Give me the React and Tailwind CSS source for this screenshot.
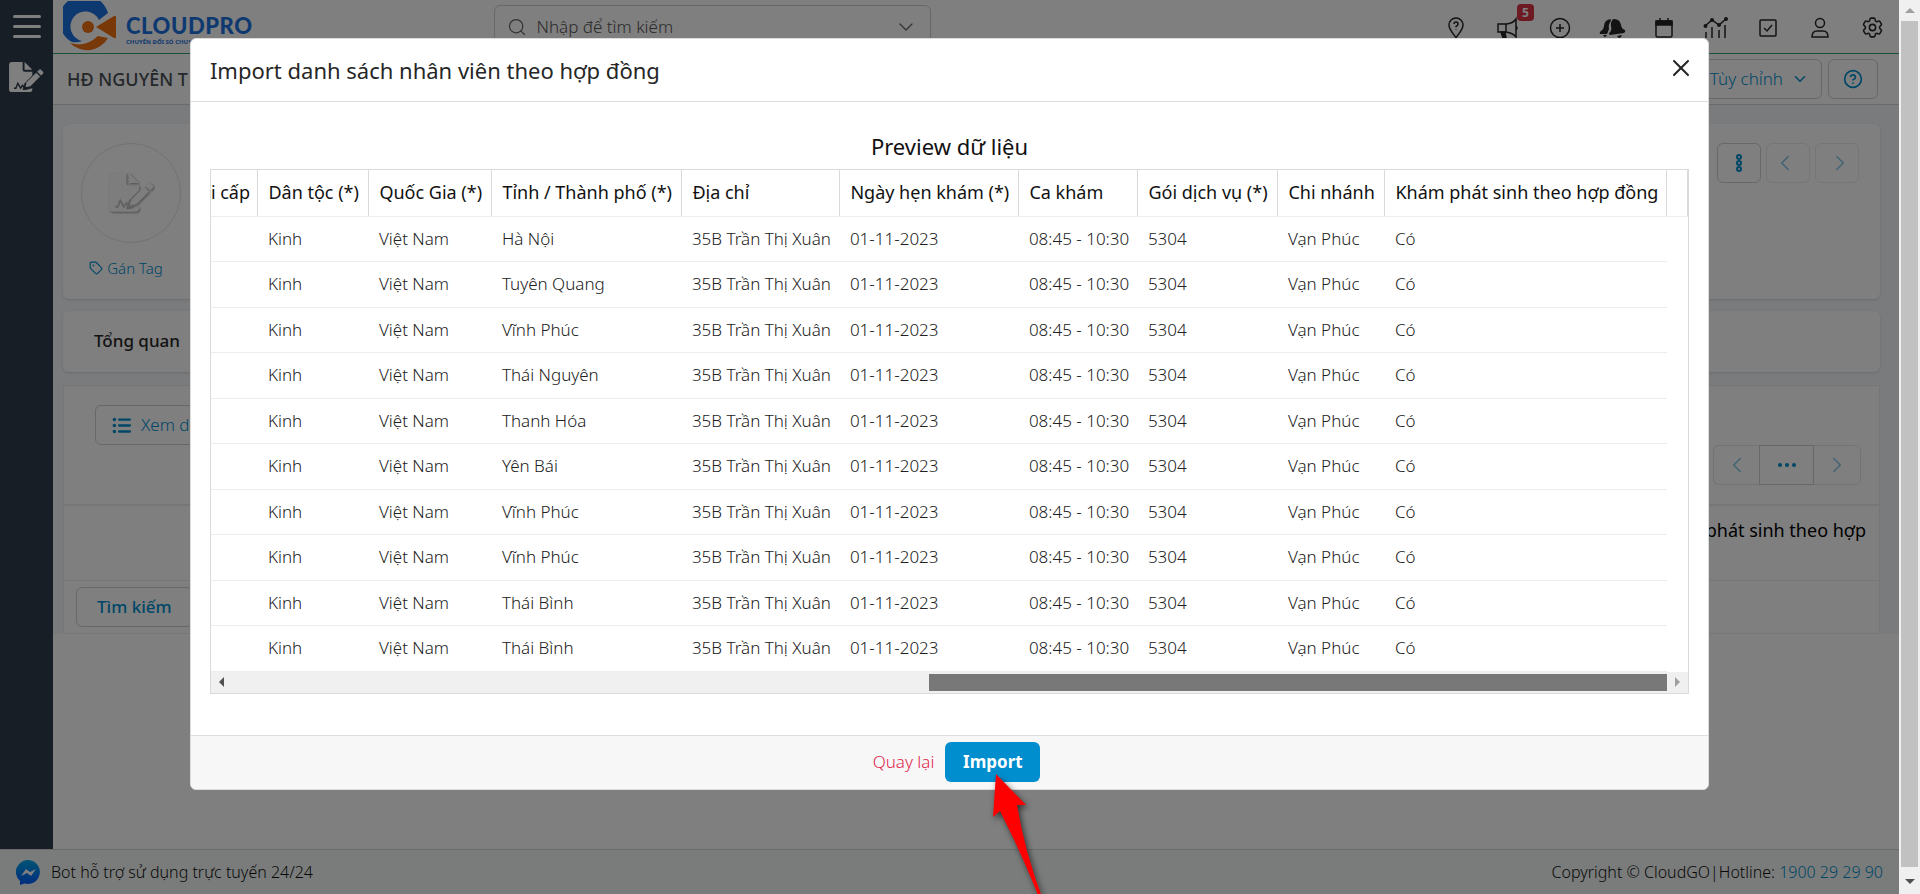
import { ChevronDown, ChevronLeft, ChevronRight, CircleHelp, Search, Tag, X } from 'lucide-react';
import { HiOutlineCog6Tooth } from 'react-icons/hi2';
import { FaListUl } from 'react-icons/fa6';

const COLUMNS = [
    { label: 'i cấp', width: 'w-[47px]' },
    { label: 'Dân tộc (*)', width: 'w-[111px]' },
    { label: 'Quốc Gia (*)', width: 'w-[123px]' },
    { label: 'Tỉnh / Thành phố (*)', width: 'w-[190px]' },
    { label: 'Địa chỉ', width: 'w-[158px]' },
    { label: 'Ngày hẹn khám (*)', width: 'w-[179px]' },
    { label: 'Ca khám', width: 'w-[119px]' },
    { label: 'Gói dịch vụ (*)', width: 'w-[140px]' },
    { label: 'Chi nhánh', width: 'w-[107px]' },
    { label: 'Khám phát sinh theo hợp đồng', width: 'w-[282px]' },
];

const PROVINCES = [
    'Hà Nội', 'Tuyên Quang', 'Vĩnh Phúc', 'Thái Nguyên', 'Thanh Hóa',
    'Yên Bái', 'Vĩnh Phúc', 'Vĩnh Phúc', 'Thái Bình', 'Thái Bình',
];

const ROWS = PROVINCES.map(province => [
    'Kinh', 'Việt Nam', province, '35B Trần Thị Xuân', '01-11-2023', '08:45 - 10:30', '5304', 'Vạn Phúc', 'Có',
]);

function ContractIcon({ className, inkClass }) {
    return (
        <svg viewBox="0 0 36 32" className={className}>
            <path
                d="M3 0h11v8a2 2 0 0 0 2 2h8v4l-8 8-2 7h3l7-2v1a3 3 0 0 1-3 3H3a3 3 0 0 1-3-3V3a3 3 0 0 1 3-3z"
                fill="currentColor"
            />
            <path d="M16 0l8 8h-8z" fill="currentColor" />
            <path d="M28 11l4 4-10 10-5 1 1-5z" fill="currentColor" />
            <path d="M29 10l2-2q1-1 2 0l2 2q1 1 0 2l-2 2z" fill="currentColor" />
            <path d="M5 27h2l2-5 3 5 2-3 2 3h3" fill="none" strokeWidth="1.5" className={inkClass} />
        </svg>
    );
}

function Logo() {
    return (
        <a href="#" className="flex items-center gap-[9px]">
            <svg viewBox="0 0 54 51" className="h-[51px] w-[54px]">
                <path d="M45 12A25 25 0 1 0 9 41q5 1 10-1A15 15 0 1 1 36 19z" fill="#1d73e0" />
                <path d="M7 42q15 5 28-7l10 2A24 24 0 0 1 7 42z" fill="#f07010" />
                <circle cx="25" cy="26" r="6" fill="#f07010" />
                <path d="M33 26l18-11q2-1 2 1v20q0 2-2 1z" fill="#f07010" />
            </svg>
            <span className="flex flex-col pt-1.5">
                <span className="font-['Lato'] text-[22px] leading-6 font-black tracking-wide text-[#1d73e0]">CLOUDPRO</span>
                <span className="text-[6px] leading-[8px] font-bold text-[#1d73e0]">CHUYỂN ĐỔI SỐ CHUYÊN NGHIỆP</span>
            </span>
        </a>
    );
}

const HEADER_ICONS = [
    {
        name: 'Địa điểm',
        icon: (
            <>
                <path d="M12 22c-2-4-7-8-7-13a7 7 0 0 1 14 0c0 5-5 9-7 13z" />
                <path d="M10 8q0-2 2-2t2 2q0 1.500-2 2.500v.8M12 13v.5" />
            </>
        ),
    },
    {
        name: 'Thông báo',
        badge: '5',
        icon: (
            <>
                <path d="M2 8h8v8H2zM10 8q7-.500 10-5v18q-3-4-10-5" />
                <path d="M5 16l2 6h3l-1-6z" fill="currentColor" />
                <path d="M20 10q2 2 0 4" />
            </>
        ),
    },
    { name: 'Thêm mới', icon: <><circle cx="12" cy="12" r="9.500" /><path d="M12 8v8M8 12h8" /></> },
    {
        name: 'Nhắc nhở',
        icon: (
            <g fill="currentColor" stroke="none">
                <path d="M11 3q-1 1 0 2-3 3-2 8-1 3-2 5H0q-1-2 1-3 3-2 3-5Q4 4 11 3z" />
                <path d="M12 5q0-2 2-2 6 0 7 6 .5 4 4 5 1 2-1 3l-14 2q-2-1 0-3 2-2 1-6-.500-4 1-5z" />
                <path d="M3 19h4q-1 2-2 2t-2-2zM17 20l5-1q-1 3-2.500 3T17 20z" />
            </g>
        ),
    },
    {
        name: 'Lịch',
        icon: (
            <>
                <rect x="4" y="5" width="16" height="16" rx="1.500" />
                <path d="M4 5h16v4H4z" fill="currentColor" />
                <path d="M8 2v3M16 2v3" />
            </>
        ),
    },
    {
        name: 'Báo cáo',
        icon: (
            <>
                <path d="M1 10l7-6 7 5 8-7" />
                <path d="M2 16v6M8 11v11M15 14v8M21 9v13" />
                <g fill="currentColor" stroke="none">
                    <circle cx="1.500" cy="10" r="2" /><circle cx="8" cy="4" r="2" />
                    <circle cx="15" cy="9" r="2" /><circle cx="22" cy="3" r="2" />
                </g>
            </>
        ),
    },
    { name: 'Công việc', icon: <><rect x="4" y="4" width="16" height="16" rx="1" /><path d="M8 12l3 3 5-6" /></> },
    { name: 'Tài khoản', icon: <><circle cx="12" cy="7" r="4.500" /><path d="M4 21q0-6 5-6h6q5 0 5 6z" /></> },
];

function PageHeader() {
    return (
        <header className="flex h-[54px] items-center justify-between border-b border-[#35a56b] pr-3.5 pl-[10px]">
            <Logo />
            <div className="mr-auto ml-[241px] flex h-11 w-[437px] items-center rounded-md border border-[#d0d0d0] px-3 text-[#666]">
                <Search size={20} strokeWidth={1.5} />
                <input
                    type="text"
                    aria-label="Tìm kiếm"
                    placeholder="Nhập để tìm kiếm"
                    className="ml-2.5 min-w-0 flex-1 text-[17px] font-light placeholder:text-[#555]"
                />
                <ChevronDown size={24} strokeWidth={1.25} />
            </div>
            <div className="flex items-center gap-7 pt-0.5 text-[#262626]">
                {HEADER_ICONS.map(({ name, badge, icon }) => (
                    <button key={name} aria-label={name} className="relative flex w-6 justify-center">
                        <svg viewBox="0 0 24 24" className="h-6 w-6 overflow-visible" fill="none" stroke="currentColor" strokeWidth="1.5">
                            {icon}
                        </svg>
                        {badge && (
                            <span className="absolute -top-3 left-[21px] h-[17px] w-[17px] rounded-sm bg-[#dc3545] text-center text-xs leading-[17px] font-bold text-white">
                                {badge}
                            </span>
                        )}
                    </button>
                ))}
                <button aria-label="Cài đặt"><HiOutlineCog6Tooth size={25} /></button>
            </div>
        </header>
    );
}

function PageContent() {
    return (
        <main className="flex flex-1 flex-col">
            <div className="flex h-[51px] items-center justify-between border-b border-[#d4d4d4] pr-[21px] pl-3.5">
                <h1 className="text-[18px] font-medium text-[#495057]">HĐ NGUYÊN T</h1>
                <div className="flex gap-1.5 text-[17px] text-[#008ecf]">
                    <button className="flex h-10 items-center gap-2 rounded-md border border-[#d0d0d0] px-3 font-light">
                        Tùy chỉnh <ChevronDown size={18} />
                    </button>
                    <button aria-label="Trợ giúp" className="flex h-10 w-[50px] items-center justify-center rounded-md border border-[#d0d0d0]">
                        <CircleHelp size={20} />
                    </button>
                </div>
            </div>

            <div className="bg-[#f3f6fa] pt-[19px] pr-[19px] pl-2.5">
                <section className="flex h-[175px] items-start justify-between rounded-md bg-white px-[18px] pt-[19px] shadow">
                    <div className="flex flex-col items-center">
                        <div className="flex h-[100px] w-[100px] items-center justify-center rounded-full border border-[#e4e4e4]">
                            <ContractIcon
                                className="h-10 w-[45px] text-[#fafafa] drop-shadow-[1px_1px_1px_rgba(0,0,0,0.4)]"
                                inkClass="stroke-[#c4c4c4]"
                            />
                        </div>
                        <a href="#" className="mt-3.5 mr-2.5 flex items-center gap-1 text-[15px] font-light text-[#008ecf]">
                            <Tag size={14} /> Gán Tag
                        </a>
                    </div>
                    <div className="mr-[3px] flex gap-[5px] text-[#008ecf]">
                        <button aria-label="Thêm" className="flex h-10 w-11 flex-col items-center justify-center rounded-md border border-[#d0d0d0]">
                            <svg viewBox="0 0 8 20" className="h-5 w-2" fill="none" stroke="currentColor" strokeWidth="2">
                                <circle cx="4" cy="4" r="2" /><circle cx="4" cy="10" r="2" /><circle cx="4" cy="16" r="2" />
                            </svg>
                        </button>
                        <button aria-label="Trước" className="flex h-10 w-11 items-center justify-center rounded-md border border-[#ececec] pr-1.5 text-[#88c8e8]">
                            <ChevronLeft size={26} strokeWidth={1.5} />
                        </button>
                        <button aria-label="Sau" className="flex h-10 w-11 items-center justify-center rounded-md border border-[#ececec] pl-1.5 text-[#88c8e8]">
                            <ChevronRight size={26} strokeWidth={1.5} />
                        </button>
                    </div>
                </section>

                <section className="mt-3 flex h-[61px] items-center rounded-md bg-white px-[31px] pb-0.5 text-[17px] font-medium text-[#262626] shadow">
                    Tổng quan
                </section>

                <section className="mt-[13px] border border-[#ececec] bg-white">
                    <div className="flex h-[118px] items-start justify-between pr-[18px] pl-[31px] text-[#008ecf]">
                        <button className="mt-[19px] flex h-10 items-center gap-2.5 rounded-md border border-[#d0d0d0] px-4 text-[17px] font-light">
                            <FaListUl size={19} /> Xem danh sách
                        </button>
                        <div className="mt-[59px] flex">
                            <button aria-label="Trang trước" className="flex h-10 w-[46px] items-center justify-center rounded-l-md border border-r-0 border-[#e6e6e6] text-[#88c8e8]">
                                <ChevronLeft size={26} strokeWidth={1.5} />
                            </button>
                            <button aria-label="Chọn trang" className="flex h-10 w-[55px] items-center justify-center border border-[#d0d0d0]">
                                <svg viewBox="0 0 18 4" className="h-1 w-[18px]" fill="currentColor">
                                    <circle cx="2" cy="2" r="2" /><circle cx="9" cy="2" r="2" /><circle cx="16" cy="2" r="2" />
                                </svg>
                            </button>
                            <button aria-label="Trang sau" className="flex h-10 w-[47px] items-center justify-center rounded-r-md border border-l-0 border-[#e6e6e6] text-[#88c8e8]">
                                <ChevronRight size={26} strokeWidth={1.5} />
                            </button>
                        </div>
                    </div>
                    <div className="flex h-[76px] justify-end border-t-2 border-[#ececec] pt-[11px] pr-[13px] text-[18px] text-black">
                        phát sinh theo hợp
                    </div>
                    <div className="flex h-[53px] items-center border-t border-[#ececec] px-3">
                        <button className="h-10 rounded-md border border-[#d0d0d0] px-5 text-[17px] font-medium text-[#008ecf]">Tìm kiếm</button>
                    </div>
                </section>
            </div>
        </main>
    );
}

function PageFooter() {
    return (
        <footer className="flex h-[45px] items-center justify-between border-t border-[#d0d6d2] bg-[#f4f9f6] pr-4 pl-4 text-base font-light text-[#111]">
            <a href="#" className="flex items-center gap-2.5">
                <svg viewBox="0 0 25 25" className="h-[25px] w-[25px]">
                    <defs>
                        <linearGradient id="messenger" x1="0" y1="0" x2="0" y2="1">
                            <stop offset="0" stopColor="#00a8e8" />
                            <stop offset="1" stopColor="#0058ff" />
                        </linearGradient>
                    </defs>
                    <path d="M12.500 0a12 12 0 1 1-4 23.500L4 25v-4A12 12 0 0 1 12.500 0z" fill="url(#messenger)" />
                    <path d="M5 16l5-7 4 3 6-3-5 7-4-3z" fill="#fff" />
                </svg>
                Bot hỗ trợ sử dụng trực tuyến 24/24
            </a>
            <p>
                Copyright © CloudGO|Hotline: <a href="#" className="text-[#008ecf]">1900 29 29 90</a>
            </p>
        </footer>
    );
}

function PreviewTable() {
    return (
        <div className="border border-[#dadada]">
            <table className="w-full table-fixed text-left text-[#212121]">
                <thead>
                    <tr className="h-[46px] text-[18px] text-[#111]">
                        {COLUMNS.map(({ label, width }, i) => (
                            <th key={label} className={`${width} border-r border-b border-r-[#dadada] border-b-[#ededed] font-normal whitespace-nowrap ${i === 0 ? 'pr-2.5 text-right' : 'pl-2.5'}`}>
                                {label}
                            </th>
                        ))}
                        <th aria-hidden="true" className="w-[21px] border-r border-b border-r-[#dadada] border-b-[#ededed]" />
                    </tr>
                </thead>
                <tbody>
                    {ROWS.map((row, index) => (
                        <tr key={index} className="text-[17px] font-light odd:h-[45px] even:h-[46px]">
                            <td className="border-b border-[#ededed]" />
                            {row.map((cell, i) => (
                                <td key={i} className="border-b border-[#ededed] pl-2.5 whitespace-nowrap">{cell}</td>
                            ))}
                            <td />
                        </tr>
                    ))}
                </tbody>
            </table>
            {/* Horizontal scrollbar */}
            <div className="flex h-[21px] items-center bg-[#f0f0f0]">
                <span className="ml-2 border-y-[5px] border-r-[5px] border-y-transparent border-r-[#505050]" />
                <span className="ml-auto h-[17px] w-1/2 bg-[#787878]" />
                <span className="mr-2 ml-2 border-y-[5px] border-l-[5px] border-y-transparent border-l-[#a0a0a0]" />
            </div>
        </div>
    );
}

function ImportModal() {
    return (
        <div role="dialog" aria-label="Import danh sách nhân viên theo hợp đồng" className="mx-auto mt-[38px] w-4/5 rounded-md border border-[#dcdcdc] bg-white">
            <div className="flex h-[63px] items-center justify-between border-b border-[#dedede] px-[19px]">
                <h2 className="text-[22px] text-[#262626]">Import danh sách nhân viên theo hợp đồng</h2>
                <button aria-label="Đóng" className="-mr-1.5 mb-1 text-[#262626]"><X size={28} strokeWidth={1.75} /></button>
            </div>
            <div className="px-[19px] pt-[29px] pb-[41px]">
                <h3 className="mb-2 text-center text-[22px] leading-[30px] text-[#111]">Preview dữ liệu</h3>
                <PreviewTable />
            </div>
            <div className="flex h-[54px] items-center justify-center gap-[11px] rounded-b-md border-t border-[#dedede] bg-[#f7f7f7] pl-3.5 text-[17px]">
                <button className="font-light text-[#e0264d]">Quay lại</button>
                <div className="relative">
                    <button className="h-10 w-[95px] rounded-md bg-[#008ecf] font-bold text-white">Import</button>
                    {/* Pointer to the import button */}
                    <svg viewBox="0 0 56 126" className="pointer-events-none absolute top-8 left-[46px] z-10 h-[126px] w-14 overflow-visible drop-shadow-[2px_3px_3px_rgba(0,0,0,0.6)]">
                        <path d="M5 0l30 31h-9q7 44 26 95h-3Q31 80 9 37l-7 6z" fill="#f00" />
                    </svg>
                </div>
            </div>
        </div>
    );
}

export default function App() {
    return (
        <div className="flex h-screen overflow-hidden bg-white font-['Noto_Sans',sans-serif]">
            <div className="relative flex min-w-0 flex-1 flex-col">
                <div className="flex min-h-0 flex-1">
                    <aside className="flex w-[53px] flex-col items-center bg-[#2e3d4b] pt-[15px] text-white">
                        <button aria-label="Menu" className="flex h-[23px] w-7 flex-col justify-between">
                            <span className="h-[3px] w-full rounded bg-current" />
                            <span className="h-[3px] w-full rounded bg-current" />
                            <span className="h-[3px] w-full rounded bg-current" />
                        </button>
                        <a href="#" aria-label="Hợp đồng" className="mt-6">
                            <ContractIcon className="h-[31px] w-[35px]" inkClass="stroke-[#2e3d4b]" />
                        </a>
                    </aside>
                    <div className="flex min-w-0 flex-1 flex-col">
                        <PageHeader />
                        <PageContent />
                    </div>
                </div>
                <PageFooter />
                <div className="absolute inset-0 bg-black/50">
                    <ImportModal />
                </div>
            </div>

            {/* Page scrollbar */}
            <div className="flex w-[21px] flex-col items-center bg-[#f0f0f0]">
                <span className="my-2 border-x-[5px] border-b-[5px] border-x-transparent border-b-[#a0a0a0]" />
                <span className="w-[17px] flex-1 bg-[#c1c1c1]" />
                <span className="mt-3 mb-2.5 border-x-[5px] border-t-[5px] border-x-transparent border-t-[#505050]" />
            </div>
        </div>
    );
}
